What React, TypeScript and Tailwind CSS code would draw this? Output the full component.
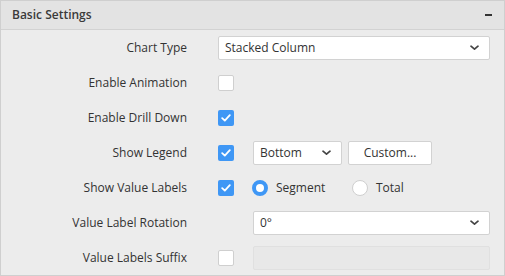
import React from 'react'

// Small chevron used inside the dropdowns
const Chevron = () => (
  <svg width="9" height="6" viewBox="0 0 9 6" fill="none">
    <path d="M1 1.2l3.5 3L8 1.2" stroke="#444" strokeWidth="1.7" strokeLinecap="round" strokeLinejoin="round" />
  </svg>
)

const Checkbox = ({ checked }: { checked?: boolean }) =>
  checked ? (
    <div className="w-4 h-4 rounded-[2px] bg-[#3f97f5] flex items-center justify-center shrink-0">
      <svg width="10" height="8" viewBox="0 0 10 8" fill="none">
        <path d="M1.2 4.2l2.6 2.4L8.8 1.2" stroke="white" strokeWidth="1.8" strokeLinecap="round" strokeLinejoin="round" />
      </svg>
    </div>
  ) : (
    <div className="w-4 h-4 rounded-[2px] bg-white border border-[#cfcfcf] shrink-0" />
  )

const Dropdown = ({ value, className }: { value: string; className: string }) => (
  <div className={`h-6 bg-white border border-[#d2d2d2] rounded-[2px] flex items-center justify-between pl-[6px] pr-[10px] ${className}`}>
    <span>{value}</span>
    <Chevron />
  </div>
)

const Radio = ({ checked, label, className = '' }: { checked?: boolean; label: string; className?: string }) => (
  <div className={`flex items-center gap-2 ${className}`}>
    {checked ? (
      <div className="w-4 h-4 rounded-full border-[4px] border-[#3f97f5] bg-white" />
    ) : (
      <div className="w-4 h-4 rounded-full border border-[#cfcfcf] bg-white" />
    )}
    <span>{label}</span>
  </div>
)

const Row = ({ label, children }: { label: string; children: React.ReactNode }) => (
  <div className="h-[35px] flex items-center">
    <div className="w-[186px] text-right">{label}</div>
    <div className="ml-[31px] flex items-center">{children}</div>
  </div>
)

export default function App() {
  return (
    <div
      className="w-[505px] border border-[#cfcfcf] bg-[#ececec] text-[12px] text-[#333]"
      style={{ fontFamily: '"Open Sans", "Noto Sans", sans-serif' }}
    >
      {/* Header */}
      <div className="h-[29px] bg-[#e3e3e3] border-b border-[#d2d2d2] flex items-center justify-between pl-[11px] pr-[12px]">
        <span className="font-semibold text-[#3a3a3a]">Basic Settings</span>
        <div className="w-[7px] h-[2px] bg-[#333]" />
      </div>

      {/* Body */}
      <Row label="Chart Type">
        <Dropdown value="Stacked Column" className="w-[272px]" />
      </Row>
      <Row label="Enable Animation">
        <Checkbox />
      </Row>
      <Row label="Enable Drill Down">
        <Checkbox checked />
      </Row>
      <Row label="Show Legend">
        <Checkbox checked />
        <Dropdown value="Bottom" className="w-[89px] ml-[19px]" />
        <div className="w-[84px] h-6 ml-[6px] bg-white border border-[#d2d2d2] rounded-[2px] flex items-center justify-center">
          Custom...
        </div>
      </Row>
      <Row label="Show Value Labels">
        <Checkbox checked />
        <div className="ml-[18px] flex items-center">
          <Radio checked label="Segment" className="w-[100px]" />
          <Radio label="Total" />
        </div>
      </Row>
      <Row label="Value Label Rotation">
        <Dropdown value="0°" className="w-[237px] ml-[35px]" />
      </Row>
      <Row label="Value Labels Suffix">
        <Checkbox />
        <div className="w-[237px] h-6 ml-[19px] bg-[#e8e8e8] border border-[#e0e0e0] rounded-[2px]" />
      </Row>
    </div>
  )
}
